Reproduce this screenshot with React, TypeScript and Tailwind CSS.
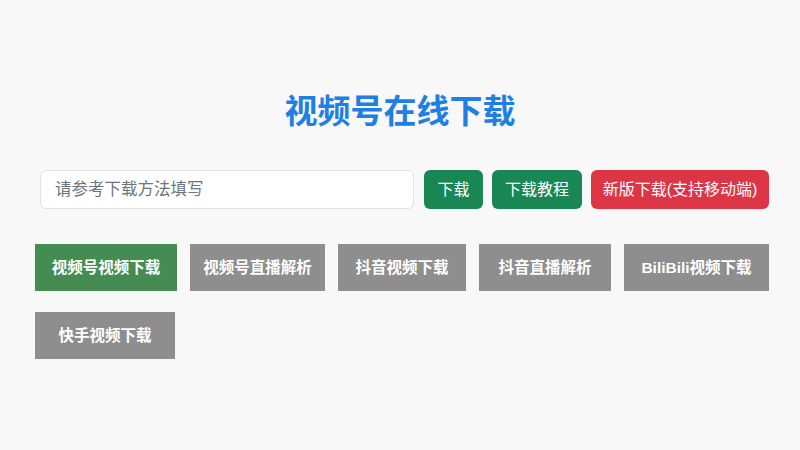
import React, { useState } from 'react';

const tabs = [
  { label: '视频号视频下载', w: 'w-[142px]' },
  { label: '视频号直播解析', w: 'w-[135px]' },
  { label: '抖音视频下载', w: 'w-[128px]' },
  { label: '抖音直播解析', w: 'w-[132px]' },
  { label: 'BiliBili视频下载', w: 'w-[145px]' },
  { label: '快手视频下载', w: 'w-[140px]' },
];

function App() {
  const [active, setActive] = useState(0);
  const [url, setUrl] = useState('');

  return (
    <div
      className="min-h-[450px] w-full bg-[#f8f8f8] text-[#212529]"
      style={{ fontFamily: '"Liberation Sans", "Noto Sans CJK SC", sans-serif' }}
    >
      {/* Title */}
      <h1 className="pt-[92px] text-center text-[33px] font-bold leading-[40px] text-[#1f7fe5]">
        视频号在线下载
      </h1>

      <div className="pl-[35px] pr-[31px]">
        {/* Search row */}
        <div className="mt-[38px] flex items-center gap-[9px] pl-[5px]">
          <input
            value={url}
            onChange={(e) => setUrl(e.target.value)}
            placeholder="请参考下载方法填写"
            className="mr-px h-[39px] flex-1 rounded-[6px] border border-[#dee2e6] bg-white px-[14px] text-[16.5px] text-[#212529] outline-none placeholder:text-[#6c757d]"
          />
          <button className="h-[39px] w-[59px] rounded-[6px] bg-[#198754] text-[16px] text-white">
            下载
          </button>
          <button className="h-[39px] w-[90px] rounded-[6px] bg-[#198754] text-[16px] text-white">
            下载教程
          </button>
          <button className="h-[39px] w-[178px] rounded-[6px] bg-[#dc3545] text-[16px] text-white">
            新版下载(支持移动端)
          </button>
        </div>

        {/* Platform tabs */}
        <div className="mt-[35px] flex flex-wrap gap-x-[13px] gap-y-[21px]">
          {tabs.map((t, i) => (
            <button
              key={t.label}
              onClick={() => setActive(i)}
              className={`h-[47px] ${t.w} text-[15.5px] font-bold text-white ${
                active === i ? 'bg-[#458c52]' : 'bg-[#8e8e8e]'
              }`}
            >
              {t.label}
            </button>
          ))}
        </div>
      </div>
    </div>
  );
}

export default App;
